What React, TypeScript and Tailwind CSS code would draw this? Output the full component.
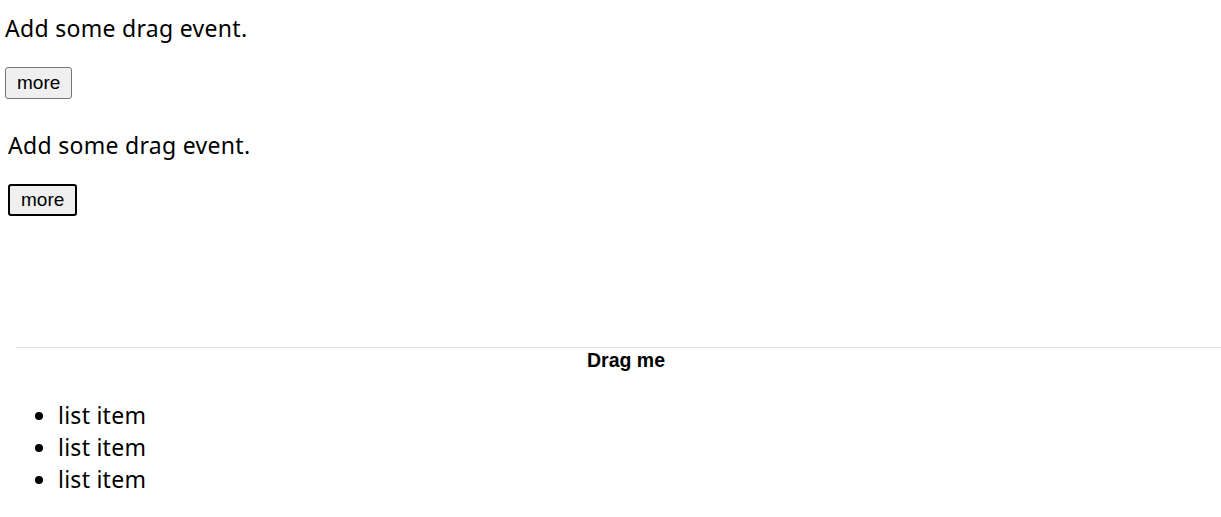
import React from 'react';

function Block({ focused }: { focused?: boolean }) {
  return (
    <div>
      <p className="text-[23px] tracking-[0.3px] leading-[32px] text-black">Add some drag event.</p>
      <button
        className={
          focused
            ? "mt-[23px] h-[32px] px-[11px] bg-[#efefef] border-2 border-black rounded-[3px] text-[19px] font-['Liberation_Sans',sans-serif] text-black"
            : "mt-[23px] h-[32px] px-[11px] bg-[#efefef] border border-[#767676] rounded-[3px] text-[19px] font-['Liberation_Sans',sans-serif] text-black"
        }
      >
        more
      </button>
    </div>
  );
}

export default function App() {
  return (
    <div className="w-[1221px] h-[517px] bg-white font-['Noto_Sans',sans-serif] overflow-hidden">
      <div className="pt-[12px] pl-[5px]">
        <Block />
      </div>
      <div className="pt-[30px] pl-[8px]">
        <Block focused />
      </div>
      <div className="mt-[131px] ml-[16px] border-t border-[#e0e0e0]">
        <div className="pl-[15px] text-center text-[19.5px] font-bold font-['Liberation_Sans',sans-serif] leading-[24px] text-black">
          Drag me
        </div>
      </div>
      <ul className="mt-[27px] pl-[58px] list-disc text-[23px] tracking-[0.25px] leading-[32px] text-black">
        <li>list item</li>
        <li>list item</li>
        <li>list item</li>
      </ul>
    </div>
  );
}
